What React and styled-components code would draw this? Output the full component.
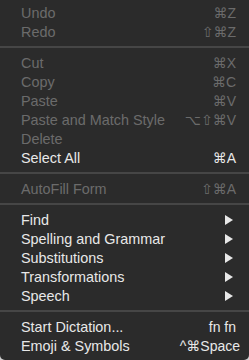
import React from "react";
import styled, { createGlobalStyle } from "styled-components";

const GlobalStyle = createGlobalStyle`
  html, body {
    margin: 0;
    padding: 0;
    background: #cfcfcf;
  }
  body {
    font-family: "Liberation Sans", "DejaVu Sans", sans-serif;
  }
`;

const items = [
  { label: "Undo", keys: "⌘Z", disabled: true },
  { label: "Redo", keys: "⇧⌘Z", disabled: true },
  { sep: true },
  { label: "Cut", keys: "⌘X", disabled: true },
  { label: "Copy", keys: "⌘C", disabled: true },
  { label: "Paste", keys: "⌘V", disabled: true },
  { label: "Paste and Match Style", keys: "⌥⇧⌘V", disabled: true },
  { label: "Delete", disabled: true },
  { label: "Select All", keys: "⌘A" },
  { sep: true },
  { label: "AutoFill Form", keys: "⇧⌘A", disabled: true },
  { sep: true },
  { label: "Find", submenu: true },
  { label: "Spelling and Grammar", submenu: true },
  { label: "Substitutions", submenu: true },
  { label: "Transformations", submenu: true },
  { label: "Speech", submenu: true },
  { sep: true },
  { label: "Start Dictation...", keys: "fn fn" },
  { label: "Emoji & Symbols", keys: "^⌘Space", wide: true },
];

export default function App() {
  return (
    <>
      <GlobalStyle />
      <Menu>
        {items.map((item, i) =>
          item.sep ? (
            <Separator key={i} />
          ) : (
            <Row key={i} $disabled={item.disabled}>
              <Label>{item.label}</Label>
              {item.keys && <Keys $wide={item.wide}>{item.keys}</Keys>}
              {item.submenu && (
                <Arrow viewBox="0 0 8 10">
                  <polygon points="0,0 8,5 0,10" fill="currentColor" />
                </Arrow>
              )}
            </Row>
          )
        )}
      </Menu>
    </>
  );
}

const Menu = styled.div`
  width: 249px;
  height: 360px;
  box-sizing: border-box;
  padding: 3px 0 5px;
  background: #2b2b2b;
  border-radius: 0 0 5px 5px;
  overflow: hidden;
`;

const Row = styled.div`
  height: 19px;
  display: flex;
  align-items: center;
  justify-content: space-between;
  padding: 0 13px 0 21px;
  font-size: 14.4px;
  color: ${(p) => (p.$disabled ? "#6b6b6b" : "#e8e8e8")};
`;

const Label = styled.span`
  white-space: nowrap;
`;

const Keys = styled.span`
  white-space: nowrap;
  font-size: 14px;
  margin-right: ${(p) => (p.$wide ? "-4px" : "0")};
`;

const Arrow = styled.svg`
  width: 8px;
  height: 10px;
  margin-right: 3px;
`;

const Separator = styled.div`
  height: 12px;
  display: flex;
  align-items: center;

  &::after {
    content: "";
    flex: 1;
    height: 2px;
    background: #464646;
  }
`;
